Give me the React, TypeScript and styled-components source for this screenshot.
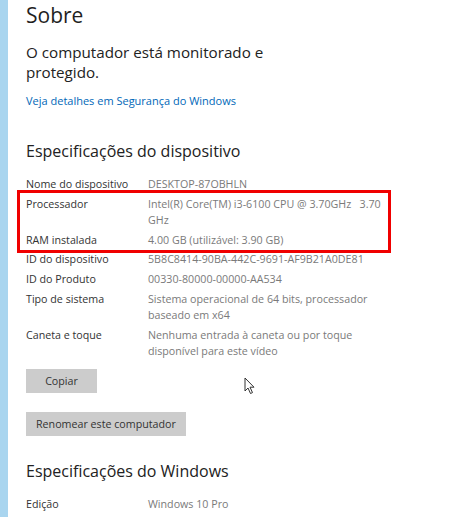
import styled, { createGlobalStyle } from "styled-components";

const GlobalStyle = createGlobalStyle`
  html, body {
    margin: 0;
    padding: 0;
    background: #ffffff;
  }
  body {
    font-family: "Open Sans", "Noto Sans", sans-serif;
    color: #222;
  }
`;

const Page = styled.div`
  display: flex;
  width: 455px;
  height: 517px;
  overflow: hidden;
  position: relative;
  background: #fff;
`;

const Strip = styled.div`
  width: 8px;
  flex-shrink: 0;
  background: #a9d5ef;
`;

const Content = styled.main`
  flex: 1;
  padding: 1px 0 0 18px;
  display: flex;
  flex-direction: column;
`;

const Title = styled.h1`
  margin: 0;
  font-size: 21px;
  line-height: 28px;
  font-weight: 400;
  color: #1f1f1f;
`;

const Status = styled.p`
  margin: 13px 0 0;
  font-size: 15.2px;
  line-height: 20px;
  font-weight: 400;
  color: #222;
`;

const Link = styled.a`
  margin-top: 11px;
  font-size: 11px;
  line-height: 16px;
  color: #0067b8;
  text-decoration: none;
`;

const SectionTitle = styled.h2<{ $top: number }>`
  margin: ${({ $top }) => $top}px 0 0;
  font-size: 16px;
  line-height: 24px;
  font-weight: 400;
  color: #222;
`;

const Specs = styled.dl`
  margin: 13px 0 0;
  display: flex;
  flex-direction: column;
  gap: 4px;
`;

const Row = styled.div`
  display: grid;
  grid-template-columns: 122px 1fr;
  font-size: 10.7px;
  line-height: 16px;
`;

const Label = styled.dt`
  margin: 0;
  color: #333;
`;

const Value = styled.dd`
  margin: 0;
  color: #7a7a7a;
  white-space: pre;
`;

const Highlight = styled.div`
  box-sizing: border-box;
  margin: -6px 0 -6px -9px;
  width: 374px;
  padding: 3px 0 2px 6px;
  border: 3px solid #f00000;
  display: flex;
  flex-direction: column;
  gap: 4px;
`;

const Button = styled.button<{ $top: number }>`
  align-self: flex-start;
  margin-top: ${({ $top }) => $top}px;
  height: 24px;
  min-width: 71px;
  padding: 0 10px;
  border: none;
  background: #cccccc;
  color: #333;
  font-family: inherit;
  font-size: 10.7px;
`;

const Cursor = styled.svg`
  position: absolute;
  left: 244px;
  top: 377px;
`;

type Spec = { label: string; value: string };

const SpecRow = ({ label, value }: Spec) => (
  <Row>
    <Label>{label}</Label>
    <Value>{value}</Value>
  </Row>
);

export default function App() {
  return (
    <>
      <GlobalStyle />
      <Page>
        <Strip />
        <Content>
          <Title>Sobre</Title>
          <Status>
            O computador está monitorado e
            <br />
            protegido.
          </Status>
          <Link href="#">Veja detalhes em Segurança do Windows</Link>

          <SectionTitle $top={30}>Especificações do dispositivo</SectionTitle>
          <Specs>
            <SpecRow label="Nome do dispositivo" value="DESKTOP-87OBHLN" />
            <Highlight>
              <SpecRow
                label="Processador"
                value={"Intel(R) Core(TM) i3-6100 CPU @ 3.70GHz   3.70\nGHz"}
              />
              <SpecRow label="RAM instalada" value="4.00 GB (utilizável: 3.90 GB)" />
            </Highlight>
            <SpecRow
              label="ID do dispositivo"
              value="5B8C8414-90BA-442C-9691-AF9B21A0DE81"
            />
            <SpecRow label="ID do Produto" value="00330-80000-00000-AA534" />
            <SpecRow
              label="Tipo de sistema"
              value={"Sistema operacional de 64 bits, processador\nbaseado em x64"}
            />
            <SpecRow
              label="Caneta e toque"
              value={"Nenhuma entrada à caneta ou por toque\ndisponível para este vídeo"}
            />
          </Specs>

          <Button $top={10}>Copiar</Button>
          <Button $top={19}>Renomear este computador</Button>

          <SectionTitle $top={23}>Especificações do Windows</SectionTitle>
          <Specs>
            <SpecRow label="Edição" value="Windows 10 Pro" />
          </Specs>
        </Content>
        <Cursor width="12" height="18" viewBox="0 0 12 18">
          <path
            d="M1 1 L1 14 L4 11 L6.5 16.5 L8.5 15.6 L6 10.2 L10 10.2 Z"
            fill="#fff"
            stroke="#333"
            strokeWidth="1"
            strokeLinejoin="round"
          />
        </Cursor>
      </Page>
    </>
  );
}
